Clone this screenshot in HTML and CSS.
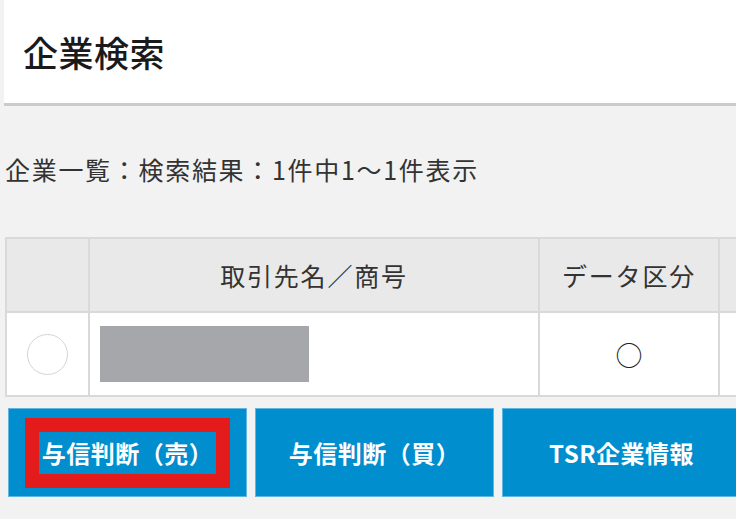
FILE: index.html
```html
<!DOCTYPE html>
<html lang="ja">
<head>
    <meta charset="UTF-8">
    <meta name="viewport" content="width=device-width, initial-scale=1.0">
    <title>企業検索</title>
    <link rel="stylesheet" href="styles.css">
</head>
<body>
    <header class="page-header">
        <h1>企業検索</h1>
    </header>

    <main class="content">
        <p class="result-count">企業一覧：検索結果：1件中1〜1件表示</p>

        <table class="company-table">
            <colgroup>
                <col class="col-select">
                <col class="col-name">
                <col class="col-type">
                <col class="col-more">
            </colgroup>
            <thead>
                <tr>
                    <th></th>
                    <th>取引先名／商号</th>
                    <th>データ区分</th>
                    <th></th>
                </tr>
            </thead>
            <tbody>
                <tr>
                    <td class="select-cell"><span class="radio"></span></td>
                    <td class="name-cell"><span class="masked"></span></td>
                    <td class="type-cell">○</td>
                    <td></td>
                </tr>
            </tbody>
        </table>

        <div class="actions">
            <button type="button" class="action-btn"><span class="highlight">与信判断（売）</span></button>
            <button type="button" class="action-btn">与信判断（買）</button>
            <button type="button" class="action-btn">TSR企業情報</button>
        </div>
    </main>
</body>
</html>
```

FILE: styles.css
```css
html, body {
    overflow: hidden;
}
body {
    margin: 0;
    background-color: #f2f2f2;
    font-family: "Noto Sans CJK JP", "Noto Sans", sans-serif;
    color: #333;
}
.page-header {
    margin-left: 4px;
    height: 103px;
    background-color: white;
    border-bottom: 3px solid #cbcbcb;
    display: flex;
    align-items: center;
    padding-left: 19px;
}
.page-header h1 {
    margin: 0;
    font-size: 35px;
    font-weight: 500;
    color: #1a1a1a;
    line-height: 1;
    letter-spacing: 0.5px;
}
.content {
    padding-left: 5px;
}
.result-count {
    margin: 45px 0 50px;
    font-size: 25px;
    line-height: 36px;
    letter-spacing: 1.7px;
    color: #333;
}
.company-table {
    border-collapse: collapse;
    table-layout: fixed;
    width: 933px;
    font-size: 25px;
}
.col-select { width: 83px; }
.col-name { width: 450px; }
.col-type { width: 180px; }
.col-more { width: 220px; }
.company-table th,
.company-table td {
    border: 2px solid #d9d9d9;
    padding: 0;
    text-align: center;
}
.company-table th {
    height: 72px;
    background-color: #e9e9e9;
    font-weight: 400;
    letter-spacing: 1.8px;
    color: #333;
}
.company-table td {
    height: 82px;
    background-color: white;
    line-height: 1;
}
.radio {
    display: block;
    width: 39px;
    height: 39px;
    margin: 0 auto;
    border: 1.5px solid #d4d4d4;
    border-radius: 50%;
}
.name-cell {
    text-align: left !important;
    padding-left: 10px !important;
}
.masked {
    display: block;
    width: 209px;
    height: 56px;
    background-color: #a6a7aa;
}
.type-cell {
    font-size: 27px;
    color: #222;
}
.actions {
    display: flex;
    gap: 8px;
    margin-top: 11px;
    padding-left: 3px;
}
.action-btn {
    flex: none;
    width: 239px;
    height: 89px;
    background-color: #008ecf;
    border: 1px solid #5fb6e2;
    color: white;
    font-family: inherit;
    font-size: 24px;
    font-weight: 700;
    letter-spacing: 0.5px;
    padding: 0;
    cursor: pointer;
}
.highlight {
    display: inline-block;
    border: 14px solid #e31b1b;
    line-height: 42px;
    padding: 0 3px;
}
```
